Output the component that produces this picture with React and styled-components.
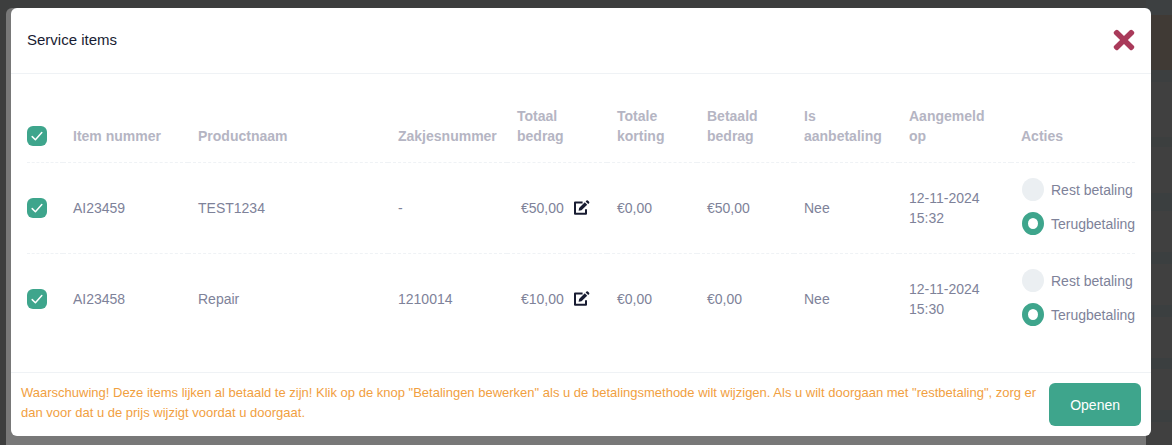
import React, { useState } from 'react';
import styled, { createGlobalStyle } from 'styled-components';
import { FaTimes } from 'react-icons/fa';

const items = [
  { id: 'AI23459', product: 'TEST1234', bag: '-', total: '€50,00', discount: '€0,00', paid: '€50,00', date: '12-11-2024', time: '15:32' },
  { id: 'AI23458', product: 'Repair', bag: '1210014', total: '€10,00', discount: '€0,00', paid: '€0,00', date: '12-11-2024', time: '15:30' },
];

function CheckBox({ label, checked, onChange }) {
  return (
    <CheckLabel>
      <CheckInput type="checkbox" aria-label={label} checked={checked} onChange={onChange} />
      <CheckMark viewBox="0 0 20 20">
        <path d="M5.2 10.6l3.2 3.1L14.8 6.6" />
      </CheckMark>
    </CheckLabel>
  );
}

function EditIcon() {
  return (
    <svg width="16" height="16" viewBox="0 0 16 16" fill="none">
      <path d="M8.6 2.6H1v11.2h11V9.2" stroke="currentColor" strokeWidth="2" strokeLinejoin="round" />
      <path d="M4.6 10.8l.5-2.9 5.7-5.6 2.4 2.4-5.7 5.6z" fill="currentColor" />
      <path d="M11.6 1.5l.9-.9q.7-.6 1.4 0l1.2 1.2q.6.7 0 1.4l-.9.8z" fill="currentColor" />
    </svg>
  );
}

function App() {
  const [selected, setSelected] = useState(items.map(item => item.id));
  const allSelected = selected.length === items.length;

  const toggle = id =>
    setSelected(
      selected.includes(id) ? selected.filter(s => s !== id) : [...selected, id],
    );

  return (
    <>
      <GlobalStyle />
      <Backdrop>
        <BackPage />
        <BackPanel />
        <Dialog role="dialog" aria-labelledby="title">
          <Header>
            <Title id="title">Service items</Title>
            <CloseButton type="button" aria-label="Sluiten">
              <FaTimes size={30} />
            </CloseButton>
          </Header>
          <Body>
            <Table>
              <colgroup>
                <Col $width={36} />
                <Col $width={125} />
                <Col $width={200} />
                <Col $width={119} />
                <Col $width={100} />
                <Col $width={90} />
                <Col $width={97} />
                <Col $width={105} />
                <Col $width={112} />
                <Col $width={124} />
              </colgroup>
              <thead>
                <tr>
                  <Th>
                    <CheckBox
                      label="Alles"
                      checked={allSelected}
                      onChange={() => setSelected(allSelected ? [] : items.map(item => item.id))}
                    />
                  </Th>
                  <Th>Item nummer</Th>
                  <Th>Productnaam</Th>
                  <Th>Zakjesnummer</Th>
                  <Th>Totaal bedrag</Th>
                  <Th>Totale korting</Th>
                  <Th>Betaald bedrag</Th>
                  <Th>Is aanbetaling</Th>
                  <Th>Aangemeld op</Th>
                  <Th>Acties</Th>
                </tr>
              </thead>
              <tbody>
                {items.map(item => (
                  <Row key={item.id}>
                    <Td>
                      <CheckBox
                        label={item.id}
                        checked={selected.includes(item.id)}
                        onChange={() => toggle(item.id)}
                      />
                    </Td>
                    <Td>{item.id}</Td>
                    <Td>{item.product}</Td>
                    <Td>{item.bag}</Td>
                    <Td>
                      <Amount>
                        {item.total}
                        <EditButton type="button" aria-label="Bewerken">
                          <EditIcon />
                        </EditButton>
                      </Amount>
                    </Td>
                    <Td>{item.discount}</Td>
                    <Td>{item.paid}</Td>
                    <Td>Nee</Td>
                    <Td>
                      {item.date} {item.time}
                    </Td>
                    <Td>
                      <RadioGroup>
                        <RadioLabel>
                          <Radio type="radio" name={item.id} />
                          Rest betaling
                        </RadioLabel>
                        <RadioLabel>
                          <Radio type="radio" name={item.id} defaultChecked />
                          Terugbetaling
                        </RadioLabel>
                      </RadioGroup>
                    </Td>
                  </Row>
                ))}
              </tbody>
            </Table>
          </Body>
          <Footer>
            <Warning>
              Waarschuwing! Deze items lijken al betaald te zijn! Klik op de knop "Betalingen
              bewerken" als u de betalingsmethode wilt wijzigen. Als u wilt doorgaan met
              "restbetaling", zorg er dan voor dat u de prijs wijzigt voordat u doorgaat.
            </Warning>
            <OpenButton type="button">Openen</OpenButton>
          </Footer>
        </Dialog>
      </Backdrop>
    </>
  );
}

const GlobalStyle = createGlobalStyle`
  * {
    box-sizing: border-box;
  }

  body {
    margin: 0;
    background-color: #3d3e3e;
    font-family: 'Liberation Sans', Arial, sans-serif;
    font-size: 14px;
    line-height: 20px;
    color: #7e8299;
  }
`;

const Backdrop = styled.div`
  position: relative;
  min-height: 100vh;
  padding: 8px 21px 9px 11px;
  overflow: hidden;
`;

/* dimmed list of the page, visible beside the dialogs */
const BackPage = styled.div`
  position: absolute;
  top: 0;
  bottom: 0;
  right: 0;
  width: 26px;
  background: linear-gradient(
    #3d4041 15px,
    #403a35 15px 70px,
    #3c3f40 70px 82px,
    #404040 82px 137px,
    #3c3f3f 137px 147px,
    #404040 147px 193px,
    #3b3f40 193px 211px,
    #404040 211px 252px,
    #3b3f40 252px 264px,
    #404040 264px 305px,
    #3b3f40 305px 317px,
    #404040 317px 358px,
    #3b3f40 358px 369px,
    #404040 369px 410px,
    #3b3f40 410px 422px,
    #404040 422px
  );
`;

/* the dialog that stays open underneath */
const BackPanel = styled.div`
  position: absolute;
  top: 8px;
  bottom: 0;
  left: 6px;
  right: 26px;
  background-color: #787878;
  border-radius: 6px 6px 0 0;
`;

const Dialog = styled.div`
  position: relative;
  background-color: #fff;
  border-radius: 6px;
`;

const Header = styled.header`
  display: flex;
  align-items: center;
  justify-content: space-between;
  height: 66px;
  padding: 0 12px 2px 16px;
  border-bottom: 1px solid #eff2f5;
`;

const Title = styled.h1`
  margin: 0;
  font-size: 15px;
  font-weight: 400;
  color: #181c32;
`;

const CloseButton = styled.button`
  display: flex;
  padding: 0;
  border: 0;
  background: none;
  color: #a93a5a;
  cursor: pointer;
`;

const Body = styled.div`
  padding: 16px 16px 28px;
`;

const Table = styled.table`
  width: 100%;
  table-layout: fixed;
  border-collapse: collapse;
`;

const Col = styled.col`
  width: ${props => props.$width}px;
`;

const Th = styled.th`
  padding: 16px 10px;
  border-bottom: 1px dashed #eff2f5;
  color: #b5b5c3;
  font-weight: 700;
  text-align: left;
  vertical-align: bottom;

  &:first-child {
    padding-left: 0;
  }
`;

const Td = styled.td`
  padding: 16px 10px;
  vertical-align: middle;

  &:first-child {
    padding-left: 0;
  }

  &:last-child {
    padding: 15px 0 18px 10px;
  }
`;

const Row = styled.tr`
  &:not(:last-child) ${Td} {
    border-bottom: 1px dashed #eff2f5;
  }
`;

const CheckLabel = styled.label`
  display: grid;
  width: 20px;
  height: 20px;
`;

const CheckInput = styled.input`
  grid-area: 1 / 1;
  appearance: none;
  width: 20px;
  height: 20px;
  margin: 0;
  border-radius: 6px;
  background-color: #ebeff2;

  &:checked {
    background-color: #3ea58c;
  }
`;

const CheckMark = styled.svg`
  grid-area: 1 / 1;
  width: 20px;
  height: 20px;
  fill: none;
  stroke: #fff;
  stroke-width: 1.5;
  stroke-linecap: round;
  stroke-linejoin: round;
  pointer-events: none;
`;

const Amount = styled.div`
  display: flex;
  align-items: center;
  gap: 10px;
  padding-left: 4px;
`;

const EditButton = styled.button`
  display: flex;
  padding: 0;
  border: 0;
  background: none;
  color: #181c32;
  cursor: pointer;
`;

const RadioGroup = styled.div`
  display: flex;
  flex-direction: column;
  gap: 11px;
  padding-left: 1px;
`;

const RadioLabel = styled.label`
  display: flex;
  align-items: center;
  gap: 7px;
  white-space: nowrap;
`;

const Radio = styled.input`
  appearance: none;
  flex: none;
  width: 22px;
  height: 23px;
  margin: 0;
  border-radius: 50%;
  background-color: #ebeff2;

  &:checked {
    border: 6px solid #3ea58c;
    background-color: #fff;
  }
`;

const Footer = styled.footer`
  display: flex;
  align-items: flex-start;
  justify-content: space-between;
  gap: 10px;
  padding: 10px;
  border-top: 1px solid #eff2f5;
`;

const Warning = styled.p`
  margin: 0;
  font-size: 13px;
  color: #f1a03f;
`;

const OpenButton = styled.button`
  flex: none;
  height: 43px;
  padding: 0 21px;
  border: 0;
  border-radius: 6px;
  background-color: #3ea58c;
  color: #fff;
  font-family: inherit;
  font-size: 14px;
  cursor: pointer;
`;

export default App;
